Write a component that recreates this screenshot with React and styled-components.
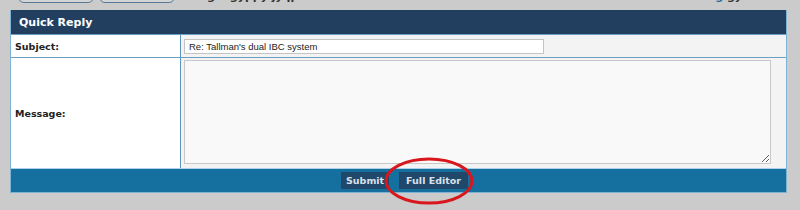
import styled, { createGlobalStyle } from "styled-components"

const Global = createGlobalStyle`
  body {
    margin: 0;
    background: #cbcbcb;
    font-family: "DejaVu Sans", Verdana, sans-serif;
  }
`

const Page = styled.div`
  width: 800px;
  height: 210px;
  overflow: hidden;
  background: #cbcbcb;
`

const TopBar = styled.div`
  height: 10px;
  display: flex;
  align-items: flex-end;
  padding-left: 18px;
  gap: 5px;
  overflow: hidden;
`

const Pill = styled.div`
  width: 74px;
  height: 20px;
  flex: none;
  border: 1px solid #587a99;
  border-radius: 6px;
  background: #d4d4d4;
  margin-bottom: 7px;
`

const TopText = styled.div`
  font-size: 11px;
  font-weight: bold;
  color: #333;
  margin: 0 0 8px 12px;
  line-height: 11px;
  white-space: nowrap;
  flex: ${(p) => (p.$grow ? 1 : "none")};
  text-align: ${(p) => (p.$grow ? "right" : "left")};
  padding-right: ${(p) => (p.$grow ? "58px" : 0)};
  span { color: #1b6fa3; }
`

const Panel = styled.div`
  margin-left: 10px;
  width: 775px;
  border: 1px solid #7fb3d3;
  border-top: none;
`

const Header = styled.div`
  height: 24px;
  background: #223f5f;
  color: #fff;
  font-size: 11px;
  font-weight: bold;
  display: flex;
  align-items: center;
  padding-left: 8px;
`

const Row = styled.div`
  display: grid;
  grid-template-columns: 170px 1fr;
  height: ${(p) => p.$h}px;
  border-top: 1px solid #6b9fc2;
`

const Label = styled.div`
  background: #fff;
  border-right: 1px solid #5b93bb;
  display: flex;
  align-items: center;
  padding-left: 4px;
  font-size: 9.5px;
  font-weight: bold;
  color: #222;
`

const Field = styled.div`
  background: #f3f3f3;
  display: flex;
  align-items: ${(p) => (p.$top ? "flex-start" : "center")};
  padding: ${(p) => (p.$top ? "2px 0 0 3px" : "0 0 0 3px")};
`

const SubjectInput = styled.input`
  width: 360px;
  height: 15px;
  box-sizing: border-box;
  border: 1px solid #c4c4c4;
  background: #fff;
  font-family: "Liberation Sans", Arial, sans-serif;
  font-size: 9.5px;
  color: #222;
  padding: 0 4px;
  outline: none;
`

const MessageArea = styled.textarea`
  width: 587px;
  height: 104px;
  box-sizing: border-box;
  border: 1px solid #c8c8c8;
  background: #f9f9f9;
  resize: both;
  outline: none;
`

const Footer = styled.div`
  height: 23px;
  background: #1570a0;
  border-top: 1px solid #a9d1ea;
  display: flex;
  justify-content: center;
  align-items: center;
  gap: 10px;
  padding-left: 12px;
`

const Btn = styled.button`
  height: 17px;
  border: none;
  background: #20486b;
  color: #d9e2ea;
  font-family: "DejaVu Sans", Verdana, sans-serif;
  font-size: 9.5px;
  font-weight: bold;
  padding: 0 ${(p) => p.$pad}px;
  position: relative;
`

const Circle = styled.svg`
  position: absolute;
  left: -18px;
  top: -15px;
  pointer-events: none;
`

export default function App() {
  return (
    <Page>
      <Global />
      <TopBar>
        <Pill />
        <Pill />
        <TopText>Eagle gyppy jyqp</TopText>
        <TopText $grow>
          <span>g</span> gy
        </TopText>
      </TopBar>
      <Panel>
        <Header>Quick Reply</Header>
        <Row $h={22}>
          <Label>Subject:</Label>
          <Field>
            <SubjectInput defaultValue="Re: Tallman's dual IBC system" />
          </Field>
        </Row>
        <Row $h={110}>
          <Label>Message:</Label>
          <Field $top>
            <MessageArea />
          </Field>
        </Row>
        <Footer>
          <Btn $pad={5}>Submit</Btn>
          <Btn $pad={7}>
            Full Editor
            <Circle width="96" height="48" viewBox="0 0 96 48">
              <ellipse cx="48" cy="24" rx="43" ry="22" fill="none" stroke="#d8161c" strokeWidth="3" />
            </Circle>
          </Btn>
        </Footer>
      </Panel>
    </Page>
  )
}
